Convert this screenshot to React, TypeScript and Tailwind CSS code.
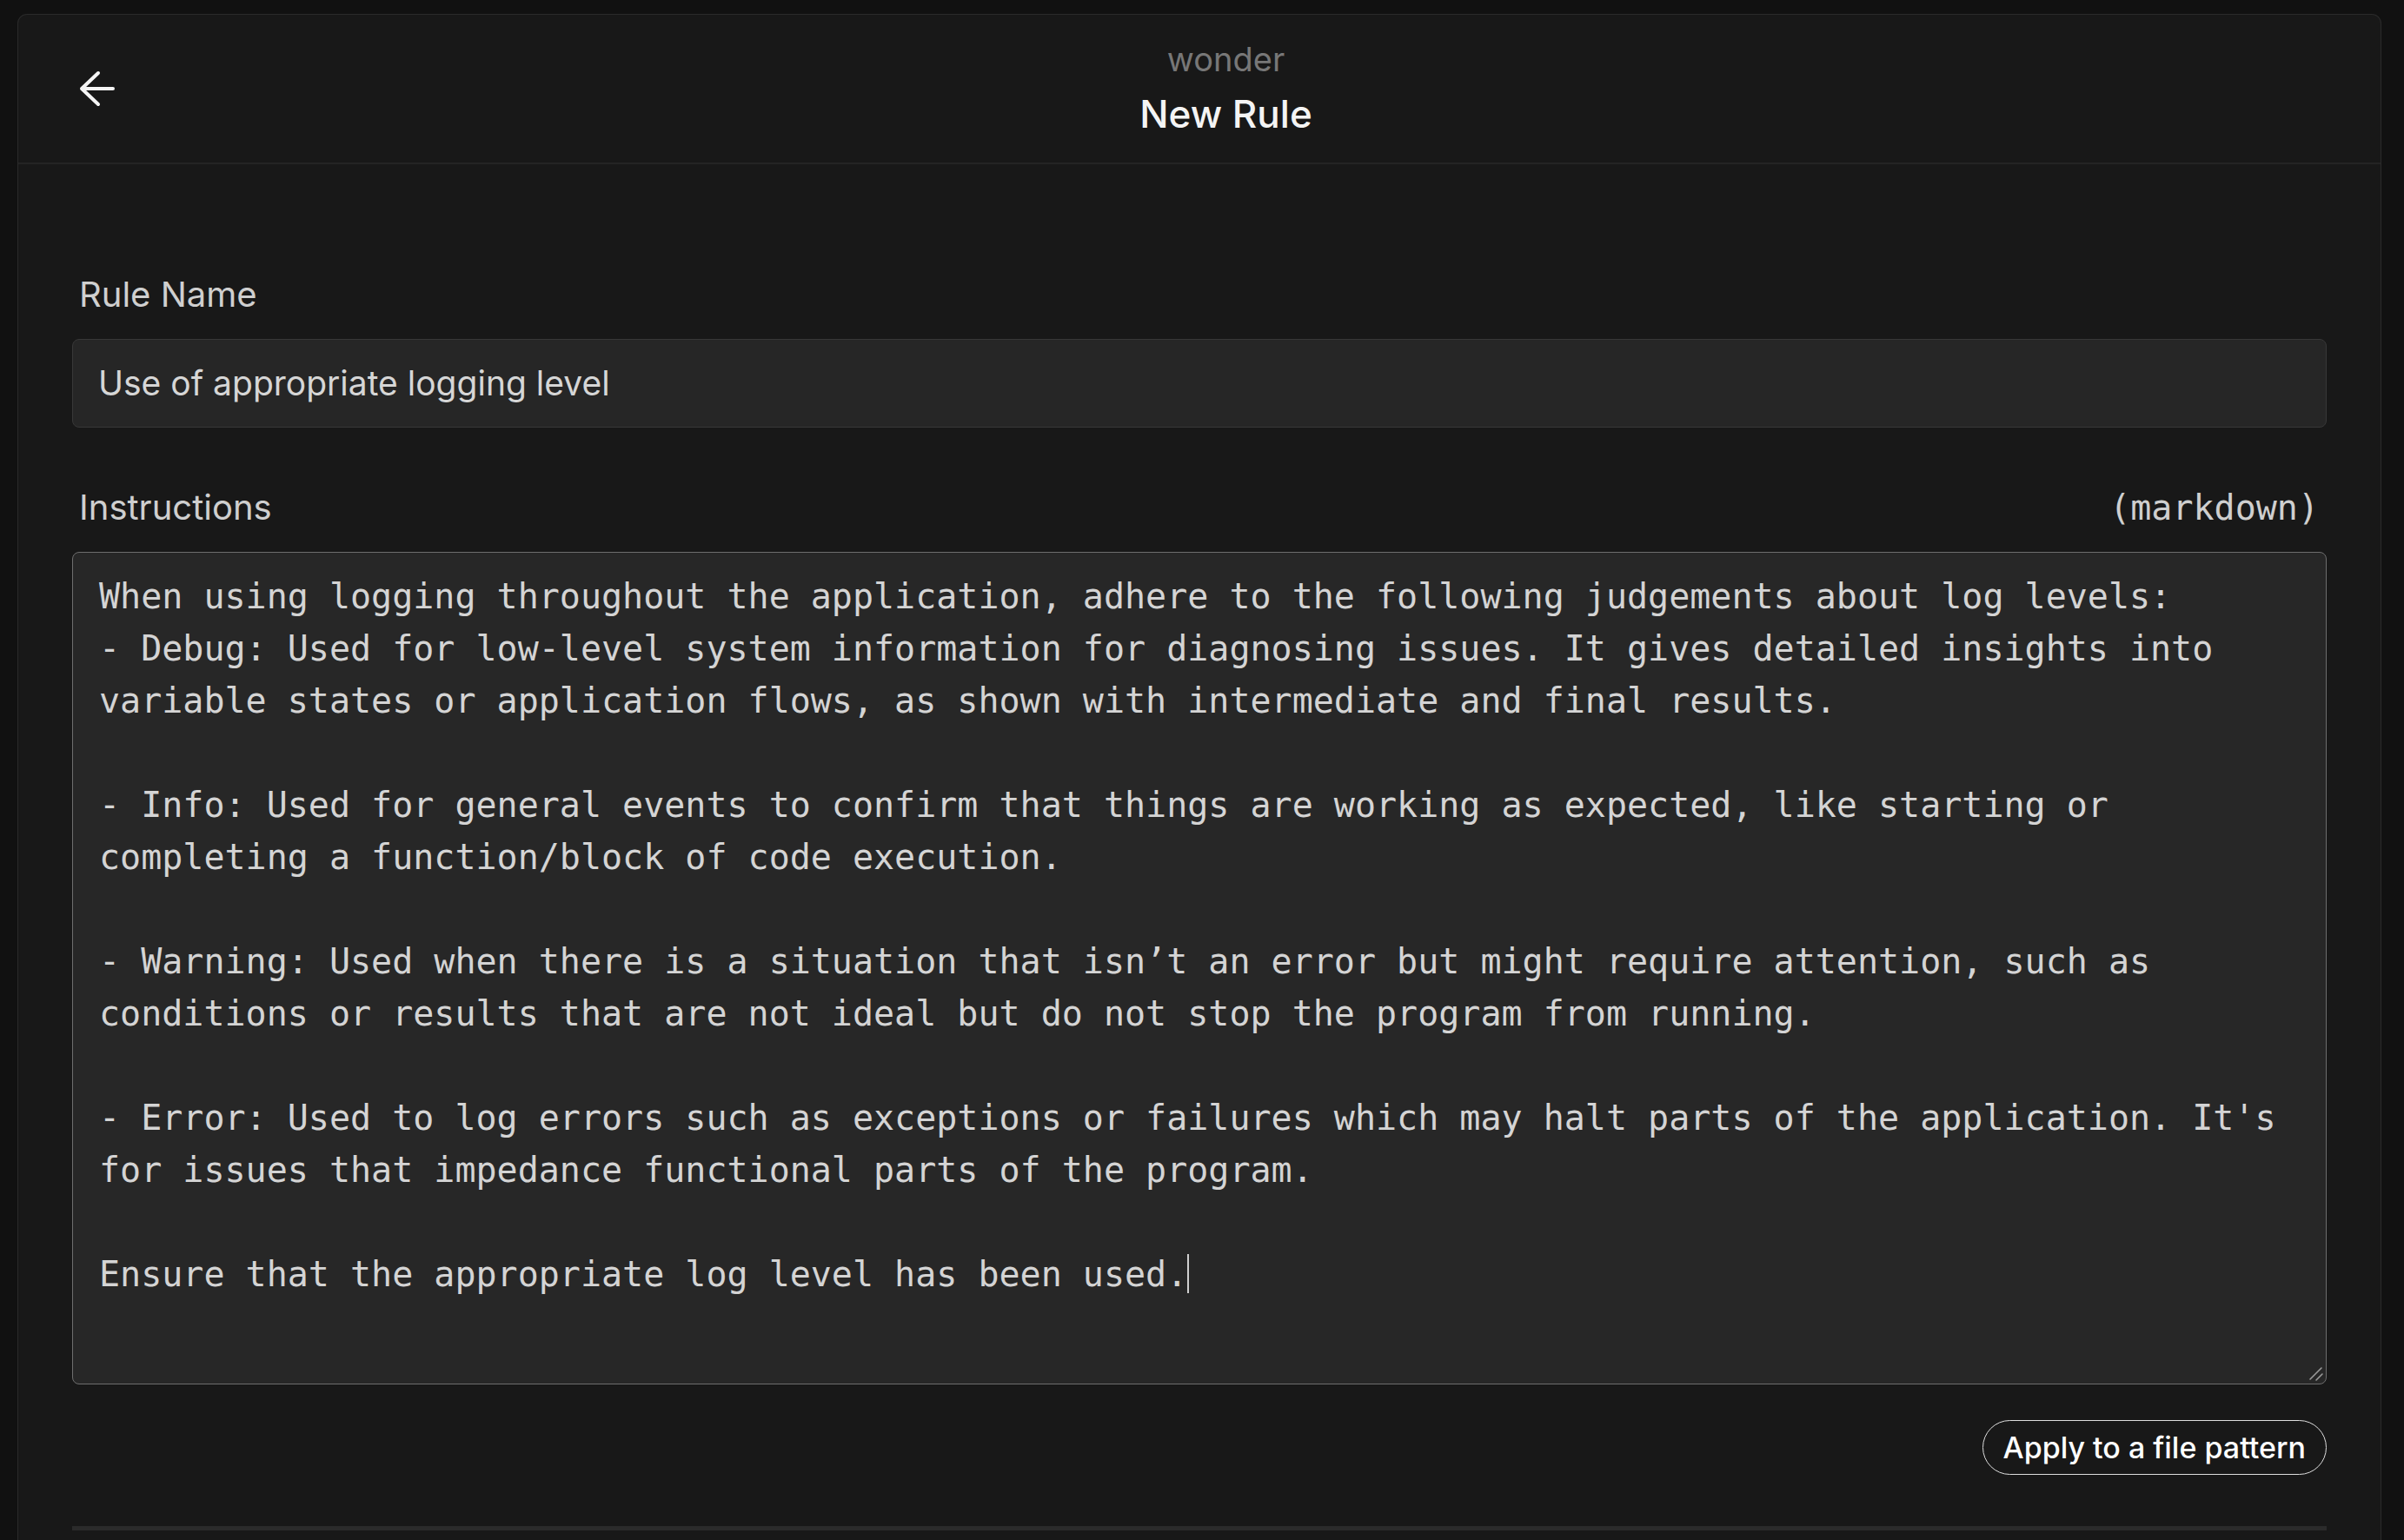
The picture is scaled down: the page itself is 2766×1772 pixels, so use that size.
import React from "react";

const lines: string[] = [
  "When using logging throughout the application, adhere to the following judgements about log levels:",
  "- Debug: Used for low-level system information for diagnosing issues. It gives detailed insights into",
  "variable states or application flows, as shown with intermediate and final results.",
  "",
  "- Info: Used for general events to confirm that things are working as expected, like starting or",
  "completing a function/block of code execution.",
  "",
  "- Warning: Used when there is a situation that isn\u2019t an error but might require attention, such as",
  "conditions or results that are not ideal but do not stop the program from running.",
  "",
  "- Error: Used to log errors such as exceptions or failures which may halt parts of the application. It's",
  "for issues that impedance functional parts of the program.",
  "",
  "Ensure that the appropriate log level has been used.",
];

export default function App() {
  return (
    <div
      className="min-h-screen w-full bg-[#111111] pl-[20px] pr-[26px] pt-[16px] overflow-hidden"
      style={{ fontFamily: "Inter, 'Noto Sans', sans-serif" }}
    >
      <div className="h-[1756px] rounded-t-[11px] border border-b-0 border-[#2a2a2a] bg-[#181818] flex flex-col">
        {/* Header */}
        <div className="flex items-center border-b-2 border-[#242424] pl-[69px] pr-[52px] pt-[28px] pb-[29px]">
          <button className="w-[44px] h-[44px] flex items-center justify-center shrink-0">
            <svg width="44" height="44" viewBox="0 0 44 44" fill="none">
              <path
                d="M40 22 H4 M23 4 L4 22 L23 40"
                stroke="#f5f5f5"
                strokeWidth="4"
                strokeLinecap="round"
                strokeLinejoin="round"
              />
            </svg>
          </button>
          <div className="flex-1 flex flex-col items-center">
            <div className="text-[38px] leading-[46px] text-[#777777]">wonder</div>
            <div className="mt-[14px] text-[44px] leading-[53px] font-medium text-[#f4f4f4]">New Rule</div>
          </div>
        </div>

        {/* Body */}
        <div className="flex flex-col px-[62px] pt-[126px]">
          <label className="pl-[8px] text-[40px] leading-[47px] text-[#cfcfcf]">Rule Name</label>
          <div className="mt-[28px] h-[102px] rounded-[8px] border border-[#383838] bg-[#262626] flex items-center pl-[29px]">
            <span className="text-[39px] leading-[48px] text-[#d6d6d6]">Use of appropriate logging level</span>
          </div>

          <div className="mt-[68px] flex items-baseline justify-between pl-[8px] pr-[9px]">
            <span className="text-[40px] leading-[47px] text-[#cfcfcf]">Instructions</span>
            <span
              className="text-[40px] leading-[47px] text-[#cfcfcf]"
              style={{ fontFamily: "'DejaVu Sans Mono', monospace" }}
            >
              (markdown)
            </span>
          </div>

          <div className="relative mt-[27px] h-[958px] rounded-[8px] border border-[#6e6e6e] bg-[#272727] pl-[30px] pr-[30px] pt-[20px]">
            <div
              className="whitespace-pre text-[40px] leading-[60px] text-[#d4d4d4]"
              style={{ fontFamily: "'DejaVu Sans Mono', monospace" }}
            >
              {lines.map((l, i) => (
                <div key={i} className="h-[60px]">
                  {l}
                  {i === lines.length - 1 && (
                    <span className="inline-block w-[2px] h-[45px] bg-[#cfcfcf] align-[-8px]" />
                  )}
                </div>
              ))}
            </div>
            <svg
              className="absolute right-[2px] bottom-[2px]"
              width="18"
              height="18"
              viewBox="0 0 18 18"
              fill="none"
            >
              <path d="M2 15 L15 2 M9 16 L16 9" stroke="#9a9a9a" strokeWidth="1.6" strokeLinecap="round" />
            </svg>
          </div>

          <div className="mt-[41px] flex justify-end">
            <button className="h-[63px] rounded-full border-[1.5px] border-[#dedede] px-[23px] text-[34px] leading-none font-medium text-white">
              Apply to a file pattern
            </button>
          </div>

          <div className="mt-[59px] h-[5px] bg-[#2b2b2b]" />
        </div>
      </div>
    </div>
  );
}
